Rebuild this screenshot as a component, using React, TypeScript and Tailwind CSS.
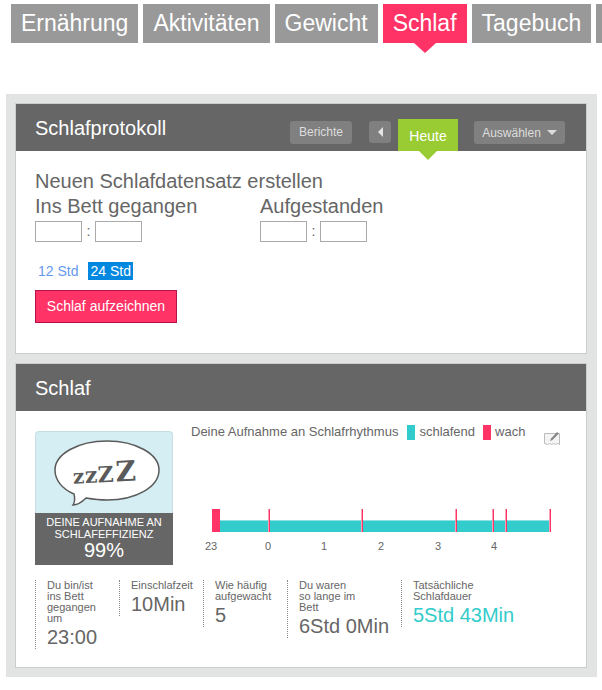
const TABS = ["Ernährung", "Aktivitäten", "Gewicht", "Schlaf", "Tagebuch"];

const STATS = [
  { lines: ["Du bin/ist", "ins Bett", "gegangen", "um"], value: "23:00" },
  { lines: ["Einschlafzeit"], value: "10Min" },
  { lines: ["Wie häufig", "aufgewacht"], value: "5" },
  { lines: ["Du waren", "so lange im", "Bett"], value: "6Std 0Min" },
  { lines: ["Tatsächliche", "Schlafdauer"], value: "5Std 43Min", teal: true },
];

// awake marks on the sleep bar, in px from the left of the bar
const TICKS = [56, 148.5, 243, 280, 293, 337];
const HOURS = [
  { label: "23", w: "w-[60px]" },
  { label: "0", w: "w-[56px]" },
  { label: "1", w: "w-[57px]" },
  { label: "2", w: "w-[57px]" },
  { label: "3", w: "w-[56px]" },
  { label: "4", w: "w-[20px]" },
];

function Tabs() {
  return (
    <nav className="flex gap-[5px] pl-[11px] pt-[4px] w-[700px]">
      {TABS.map((t) => (
        <div
          key={t}
          className={`relative h-[39px] px-[10px] text-[23px] leading-[39px] text-white shrink-0 ${
            t === "Schlaf" ? "bg-[#ff3366]" : "bg-[#999999]"
          }`}
        >
          {t}
          {t === "Schlaf" && (
            <span className="absolute left-1/2 top-full -ml-[11px] border-x-[11px] border-t-[10px] border-x-transparent border-t-[#ff3366]" />
          )}
        </div>
      ))}
      {/* next tab, cut off by the window edge */}
      <div className="h-[39px] w-[40px] shrink-0 bg-[#999999]" />
    </nav>
  );
}

function Header({ title, children }: { title: string; children?: React.ReactNode }) {
  return (
    <div className="flex h-[47px] bg-[#666666] text-white">
      <h2 className="pl-[19px] pt-[14px] text-[20px] leading-[20px] font-normal">{title}</h2>
      {children}
    </div>
  );
}

function TimeField({ label, className }: { label: string; className?: string }) {
  return (
    <div className={className}>
      <div className="text-[20px] leading-[20px]">{label}</div>
      <div className="flex items-center mt-[5px]">
        <div className="w-[47px] h-[21px] border border-[#aaaaaa] bg-white" />
        <span className="w-[13px] text-center text-[14px] leading-[21px]">:</span>
        <div className="w-[47px] h-[21px] border border-[#aaaaaa] bg-white" />
      </div>
    </div>
  );
}

function LogCard() {
  return (
    <section className="border border-[#cccccc] bg-white h-[251px]">
      <Header title="Schlafprotokoll">
        <div className="ml-auto flex items-start pr-[21px]">
          <div className="mt-[17px] h-[23px] w-[62px] rounded-[3px] bg-[#808080] text-center text-[12px] leading-[22px] text-[#dddddd]">
            Berichte
          </div>
          <div className="ml-[17px] mt-[17px] flex h-[22px] w-[22px] items-center justify-center rounded-[3px] bg-[#808080]">
            <span className="border-y-[5px] border-r-[5px] border-y-transparent border-r-[#e5e5e5]" />
          </div>
          <div className="relative ml-[7px] mt-[15px] h-[32px] w-[60px] bg-[#99cc33] pt-[8px] text-center text-[14px] leading-[18px]">
            Heute
            <span className="absolute left-1/2 top-full -ml-[9px] border-x-[9px] border-t-[9px] border-x-transparent border-t-[#99cc33]" />
          </div>
          <div className="ml-[16px] mt-[17px] flex h-[23px] w-[91px] items-center justify-center gap-[6px] rounded-[3px] bg-[#808080] text-[12px] text-[#dddddd]">
            Auswählen
            <span className="border-x-[5px] border-t-[5px] border-x-transparent border-t-[#dddddd]" />
          </div>
        </div>
      </Header>
      <div className="pl-[19px] pt-[20px] text-[#666666]">
        <div className="text-[20px] leading-[20px] mb-[5px]">Neuen Schlafdatensatz erstellen</div>
        <div className="flex">
          <TimeField label="Ins Bett gegangen" className="w-[225px]" />
          <TimeField label="Aufgestanden" />
        </div>
        <div className="mt-[20px] flex items-center text-[14px] leading-[18px]">
          <span className="ml-[3px] text-[#6699ee]">12 Std</span>
          <span className="ml-[10px] bg-[#0088e0] px-[2px] text-white">24 Std</span>
        </div>
        <button
          type="button"
          className="mt-[10px] block h-[33px] w-[142px] border border-[#b3124a] bg-[#ff3366] text-center text-[14px] text-white"
        >
          Schlaf aufzeichnen
        </button>
      </div>
    </section>
  );
}

function EfficiencyTile() {
  return (
    <div className="w-[138px] shrink-0">
      <div className="h-[82px] rounded-t-[4px] border border-b-0 border-[#c8dde3] bg-[#d5eef4]">
        <svg width="136" height="81" viewBox="0 0 136 81" fill="none">
          <path
            d="M71 9 C100 9 123 22 123 38 C123 55 100 68 71 68 C63 68 56 67 50 66 C46 70 42 73 37 73 C39 70 39 66 38 62 C26 57 19 48 19 38 C19 22 42 9 71 9 Z"
            stroke="#5a5a5a"
            strokeWidth="1.500"
            fill="#ffffff"
          />
          <g transform="rotate(-3 70 48)" fill="#5a5a5a" fontFamily="'DejaVu Serif', serif" fontWeight="700">
            <text x="37" y="50" fontSize="20">z</text>
            <text x="49" y="50" fontSize="22">z</text>
            <text x="62" y="50" fontSize="22">Z</text>
            <text x="80" y="50" fontSize="28">Z</text>
          </g>
        </svg>
      </div>
      <div className="h-[52px] bg-[#666666] pt-[3px] text-center text-white">
        <div className="text-[11px] leading-[12px]">
          DEINE AUFNAHME AN
          <br />
          SCHLAFEFFIZIENZ
        </div>
        <div className="text-[20px] leading-[21px]">99%</div>
      </div>
    </div>
  );
}

function SleepChart() {
  return (
    <div className="ml-[18px] flex-1">
      <div className="-mt-[7px] flex items-start text-[13px] leading-[15px] text-[#666666]">
        <span>Deine Aufnahme an Schlafrhythmus</span>
        <span className="ml-[9px] mt-[1px] h-[15px] w-[8px] bg-[#33cccc]" />
        <span className="ml-[4px]">schlafend</span>
        <span className="ml-[8px] mt-[1px] h-[15px] w-[8px] bg-[#ff3366]" />
        <span className="ml-[4px]">wach</span>
        <svg className="ml-[19px] mt-[7px]" width="17" height="15" viewBox="0 0 17 15" fill="none">
          <path d="M.5 2.500h15v11l-2-1-2 1-2-1-2 1-2-1-2 1-3-1z" fill="#f4f4f4" stroke="#bbbbbb" />
          <path d="M6 10l1-2.500L13 1l2 1.500-6.500 6.500z" fill="#888888" />
        </svg>
      </div>
      <div className="relative ml-[21px] mt-[63px] h-[23px] w-[339px]">
        <div className="absolute left-0 top-0 h-[23px] w-[8px] bg-[#ff3366]" />
        <div className="absolute left-[8px] bottom-0 h-[12px] w-[330px] border-t border-[#8fe0e0] bg-[#33cccc]" />
        {TICKS.map((x) => (
          <span
            key={x}
            className="absolute top-0 h-[23px] w-[2px] border-l border-[#ff9db5] bg-[#ff3366]"
            style={{ left: x }}
          />
        ))}
      </div>
      <div className="ml-[14px] mt-[8px] flex text-[11px] leading-[12px] text-[#666666]">
        {HOURS.map((h) => (
          <span key={h.label} className={h.w}>
            {h.label}
          </span>
        ))}
      </div>
    </div>
  );
}

function Stats() {
  return (
    <div className="flex items-start mt-[15px]">
      {STATS.map((s) => (
        <div
          key={s.value}
          className="border-l border-dotted border-[#888888] pl-[11px] w-[84px] shrink-0 last:w-auto [&:nth-child(4)]:w-[114px]"
        >
          <div className="text-[11px] leading-[11px] text-[#666666]">
            {s.lines.map((l) => (
              <div key={l}>{l}</div>
            ))}
          </div>
          <div
            className={`whitespace-nowrap text-[20px] leading-[23px] mt-[2px] ${
              s.teal ? "text-[#33cccc]" : "text-[#666666]"
            }`}
          >
            {s.value}
          </div>
        </div>
      ))}
    </div>
  );
}

function SleepCard() {
  return (
    <section className="mt-[9px] h-[305px] border border-[#cccccc] bg-white">
      <Header title="Schlaf" />
      <div className="px-[19px] pt-[20px]">
        <div className="flex">
          <EfficiencyTile />
          <SleepChart />
        </div>
        <Stats />
      </div>
    </section>
  );
}

export default function App() {
  return (
    <div className="h-[690px] w-[602px] overflow-hidden bg-white font-['Liberation_Sans',Arial,sans-serif]">
      <Tabs />
      <main className="ml-[6px] mt-[51px] w-[591px] bg-[#e2e4e3] pb-[9px] pl-[9px] pr-[10px] pt-[9px]">
        <LogCard />
        <SleepCard />
      </main>
    </div>
  );
}
